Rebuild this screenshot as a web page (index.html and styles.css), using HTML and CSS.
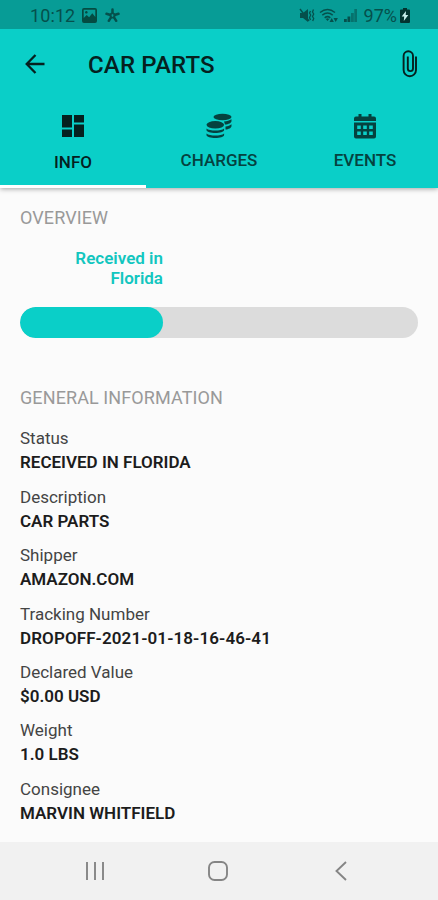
FILE: index.html
```html
<!DOCTYPE html>
<html lang="en">
<head>
    <meta charset="utf-8">
    <title>Car Parts</title>
    <meta name="viewport" content="width=device-width, initial-scale=1.0">
    <link rel="stylesheet" href="styles.css">
</head>
<body>
    <div class="screen">
        <header class="header">
            <div class="status-bar">
                <span class="clock">10:12</span>
                <svg class="status-photo" width="15" height="15" viewBox="0 0 15 15">
                    <path fill-rule="evenodd" d="M2 0h11a2 2 0 0 1 2 2v11a2 2 0 0 1-2 2H2a2 2 0 0 1-2-2V2a2 2 0 0 1 2-2zM1.7 1.7v8.2l3-3 2.4 2.3 3.2-3.9 3 3.6V1.7zM4.3 3a1.3 1.3 0 1 0 .1 0z"/>
                </svg>
                <svg class="status-star" width="15" height="15" viewBox="0 0 15 15">
                    <path fill="none" stroke="currentColor" stroke-width="2.500" stroke-linecap="round" d="M7.500 1.500v3.500M1.500 5.800l4 1.200M13.500 5.800l-4 1.200M3.800 12.800l2.200-3.500M11.200 12.800L9 9.300"/>
                    <circle cx="7.500" cy="7.500" r="2.200" fill="none" stroke="currentColor" stroke-width="1.500"/>
                </svg>
                <div class="status-right">
                    <svg width="16" height="15" viewBox="0 0 16 15">
                        <path d="M1 5h3l5-4v13l-5-4H1z"/>
                        <path fill="none" stroke="currentColor" stroke-width="1.4" d="M1 1l9 12"/>
                        <path fill="none" stroke="currentColor" stroke-width="1.3" d="M11.500 3l-1 2 1.200 2-1.200 2.500 1 2.500M14.500 1.500l-1 2.500 1.200 2-1.200 2.500 1.200 2-1 2.500"/>
                    </svg>
                    <svg class="wifi" width="19" height="15" viewBox="0 0 19 15">
                        <path fill="none" stroke="currentColor" stroke-width="1.5" d="M1 4.500q7.500-6 15 0M3.300 7.200q5.200-4.200 10.400 0M5.700 9.800q2.800-2.300 5.600 0"/>
                        <path d="M6.800 11l1.700-.8 1.700.8-1.700 2zM10.500 14l2.200-4 2.200 4zM14.500 10h4.400l-2.200 4z"/>
                    </svg>
                    <svg class="signal" width="13" height="13" viewBox="0 0 13 13">
                        <path d="M0 13v-3h2.800v3zM3.500 13V7.500h2.800V13z"/>
                        <path opacity=".55" d="M7 13V4h2.800v9zM10.300 13V0H13v13z"/>
                    </svg>
                    <span class="percent">97%</span>
                    <svg class="battery" width="10" height="15" viewBox="0 0 10 15">
                        <path d="M3 0h4v1.500h2a1 1 0 0 1 1 1V14a1 1 0 0 1-1 1H1a1 1 0 0 1-1-1V2.500a1 1 0 0 1 1-1h2z"/>
                        <path class="bolt" d="M6 3L1.700 8.600h2.500L3.800 13l4.500-6H5.700z"/>
                    </svg>
                </div>
            </div>

            <div class="app-bar">
                <svg class="back" width="20" height="20" viewBox="0 0 20 20">
                    <path fill="none" stroke="currentColor" stroke-width="2.300" d="M19.500 10H2M10.500 1L1.700 10l8.800 9"/>
                </svg>
                <h1>CAR PARTS</h1>
                <svg class="clip" width="16" height="28" viewBox="0 0 16 28">
                    <path fill="none" stroke="currentColor" stroke-width="1.900" d="M14 6.500V20a6.200 6.200 0 0 1-12.400 0V6a4.700 4.700 0 0 1 9.400 0v12.500a2.600 2.600 0 0 1-5.200 0V6.500"/>
                </svg>
            </div>

            <nav class="tabs">
                <div class="tab tab--active">
                    <svg width="24" height="24" viewBox="0 0 24 24">
                        <path d="M1 1h10v12.500H1zM13 1h10v7.500H13zM1 15.500h10V23H1zM13 10.500h10V23H13z"/>
                    </svg>
                    <span>INFO</span>
                </div>
                <div class="tab">
                    <svg width="26" height="26" viewBox="0 0 26 26">
                        <ellipse cx="16.500" cy="4" rx="9" ry="3.200"/>
                        <ellipse cx="9.300" cy="11.800" rx="8.800" ry="3.700"/>
                        <path d="M.5 15.500c3 2.700 14.600 2.700 17.600 0v1.400c0 4-17.600 4-17.600 0zM.5 20.500c3 2.700 14.600 2.700 17.600 0V22c0 4-17.600 4-17.600 0zM18 8.500c3-.3 5.500-1 7.500-2.200V8c0 2-3 3.300-6.500 3.600zM19.500 13.500c2.500-.3 4.500-1 6-2.200V13c0 2-3 3.300-6 3.600z"/>
                    </svg>
                    <span>CHARGES</span>
                </div>
                <div class="tab">
                    <svg width="22" height="25" viewBox="0 0 22 25">
                        <path fill-rule="evenodd" d="M2 3h2.500V.5h3V3h7V.5h3V3H20a2 2 0 0 1 2 2v2.500H0V5a2 2 0 0 1 2-2zM0 9h22v14a2 2 0 0 1-2 2H2a2 2 0 0 1-2-2zM3.200 12v3.500h3.600V12zM9.200 12v3.500h3.600V12zM15.200 12v3.500h3.600V12zM3.200 18v3.500h3.600V18zM9.200 18v3.500h3.600V18zM15.200 18v3.500h3.600V18z"/>
                    </svg>
                    <span>EVENTS</span>
                </div>
            </nav>
        </header>

        <main class="content">
            <h2>OVERVIEW</h2>
            <div class="progress-label">Received in<br>Florida</div>
            <div class="progress">
                <div class="progress-fill" style="width: 36%"></div>
            </div>

            <h2>GENERAL INFORMATION</h2>
            <dl class="fields">
                <dt>Status</dt>
                <dd>RECEIVED IN FLORIDA</dd>
                <dt>Description</dt>
                <dd>CAR PARTS</dd>
                <dt>Shipper</dt>
                <dd>AMAZON.COM</dd>
                <dt>Tracking Number</dt>
                <dd class="tracking">DROPOFF-2021-01-18-16-46-41</dd>
                <dt>Declared Value</dt>
                <dd>$0.00 USD</dd>
                <dt>Weight</dt>
                <dd>1.0 LBS</dd>
                <dt>Consignee</dt>
                <dd>MARVIN WHITFIELD</dd>
            </dl>
        </main>

        <footer class="nav-bar">
            <svg width="20" height="20" viewBox="0 0 20 20">
                <path d="M2 1v18M10 1v18M18 1v18"/>
            </svg>
            <svg width="20" height="20" viewBox="0 0 20 20">
                <rect x="1" y="1" width="18" height="18" rx="5.500"/>
            </svg>
            <svg width="20" height="20" viewBox="0 0 20 20">
                <path d="M15 1L5.500 10l9.500 9"/>
            </svg>
        </footer>
    </div>
</body>
</html>
```
FILE: styles.css
```css
* {
    box-sizing: border-box;
}

body {
    margin: 0;
    font-family: Roboto, sans-serif;
    background-color: #fbfbfb;
    color: #1c1c1c;
}

h1, h2, dl, dd {
    margin: 0;
}

svg {
    display: block;
    fill: currentColor;
}

.screen {
    display: flex;
    flex-direction: column;
    width: 438px;
    height: 900px;
    overflow: hidden;
}

/* Header */
.header {
    height: 188px;
    background-color: #0acfc8;
    box-shadow: 0 1px 5px rgba(0, 0, 0, 0.35);
}

.status-bar {
    display: flex;
    align-items: center;
    height: 29px;
    padding: 2px 28px 0 30px;
    background-color: #079c96;
    color: #05504c;
    font-size: 18px;
}

.clock {
    letter-spacing: 0.1px;
}

.status-photo {
    margin-left: 7px;
    color: #044b42;
}

.status-star {
    margin-left: 8px;
}

.status-right {
    display: flex;
    align-items: center;
    margin-left: auto;
}

.wifi {
    margin-left: 4px;
}

.signal {
    margin-left: 6px;
}

.percent {
    margin-left: 7px;
}

.battery {
    margin-left: 3px;
    color: #03332f;
}

.bolt {
    fill: #c9eeeb;
}

.app-bar {
    display: flex;
    align-items: center;
    height: 70px;
    padding: 0 20px 0 25px;
    color: #05211f;
}

h1 {
    margin-left: 43px;
    font-size: 24px;
    font-weight: 500;
    line-height: 28px;
    letter-spacing: 0.15px;
    padding-top: 2px;
}

.clip {
    margin-left: auto;
}

.tabs {
    display: grid;
    grid-template-columns: repeat(3, 1fr);
    height: 89px;
}

.tab {
    display: flex;
    flex-direction: column;
    align-items: center;
    padding-top: 14px;
    color: #05423f;
    font-size: 17px;
    font-weight: 500;
    line-height: 20px;
}

.tab svg {
    height: 26px;
}

.tab span {
    margin-top: 11px;
}

.tab--active {
    color: #05211f;
    border-bottom: 3px solid #fff;
}

.tab--active span {
    margin-top: 13px;
}

/* Content */
.content {
    flex: 1;
    padding: 18px 20px 0;
}

h2 {
    color: #999;
    font-size: 18px;
    font-weight: 400;
    line-height: 24px;
    letter-spacing: 0.1px;
}

.progress-label {
    width: 143px;
    margin: 19px 0 19px;
    color: #12c6bf;
    font-size: 17px;
    font-weight: 600;
    line-height: 19.500px;
    text-align: right;
}

.progress {
    height: 31px;
    margin-bottom: 48px;
    border-radius: 16px;
    background-color: #dcdcdc;
    overflow: hidden;
}

.progress-fill {
    height: 100%;
    border-radius: 16px;
    background-color: #0acfc8;
}

.fields {
    margin-top: 16.400px;
}

dt {
    color: #444;
    font-size: 17px;
    line-height: 24px;
}

dd {
    margin-bottom: 9.200px;
    font-size: 17px;
    font-weight: 600;
    line-height: 25.200px;
}

.tracking {
    letter-spacing: 0.1px;
}

/* Android navigation */
.nav-bar {
    display: grid;
    grid-template-columns: repeat(3, 123px);
    justify-content: center;
    justify-items: center;
    align-items: center;
    height: 58px;
    padding-right: 2px;
    background-color: #f1f1f1;
    color: #858585;
}

.nav-bar svg {
    fill: none;
    stroke: currentColor;
    stroke-width: 1.900;
}
```
